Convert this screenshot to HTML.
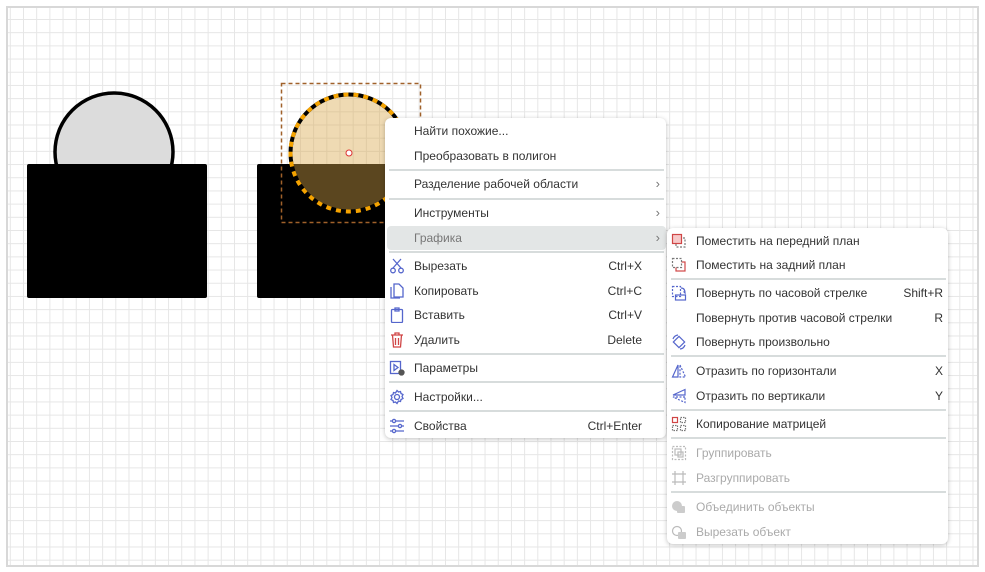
<!DOCTYPE html>
<html><head><meta charset="utf-8"><style>
*{margin:0;padding:0;box-sizing:border-box}
body{width:985px;height:572px;background:#fff;position:relative;overflow:hidden;font-family:"Liberation Sans","DejaVu Sans",sans-serif;font-size:12px;color:#333}
.canvas{position:absolute;left:6px;top:6px;width:973px;height:561px;border:2px solid #d8d8d8;
background-color:#fff;
background-image:linear-gradient(#e6e6e6 1px,transparent 1px),linear-gradient(90deg,#e6e6e6 1px,transparent 1px);
background-size:13.2px 13.2px;background-position:15px 11px}
.menu{position:absolute;background:#fff;border-radius:6px;box-shadow:0 1px 5px rgba(0,0,0,.25)}
.it{position:absolute;left:0;right:0;height:24px;line-height:24px}
.it .t{position:absolute;left:29px}
.it .k{position:absolute;right:24px}
.it .ar{position:absolute;right:6px;color:#777;font-size:13px}
.it svg{position:absolute;left:4px;top:4px}
.sep{position:absolute;left:4px;right:2px;height:2px;background:#d7dcdc}
.dis{color:#aaa}
.hl{background:#e3e6e6;border-radius:4px;left:2px;right:0;color:#777}
</style></head><body>
<div class="canvas"></div>
<svg width="985" height="572" style="position:absolute;left:0;top:0">
<circle cx="114" cy="152" r="59" fill="#dcdcdc" stroke="#000" stroke-width="3.5"/>
<rect x="27" y="164" width="180" height="134" fill="#000" rx="2"/>
<rect x="257" y="164" width="150" height="134" fill="#000" rx="2"/>
<circle cx="349" cy="153" r="58.5" fill="#d9a84a" fill-opacity=".42" stroke="#000" stroke-width="4"/>
<circle cx="349" cy="153" r="58.5" fill="none" stroke="#f5a300" stroke-width="4" stroke-dasharray="5 5"/>
<rect x="281.5" y="83.5" width="139" height="139" fill="none" stroke="#a0612a" stroke-width="1.5" stroke-dasharray="4 3"/>
<circle cx="349" cy="153" r="3" fill="#fff" stroke="#d33" stroke-width="1"/>
</svg>

<div class="menu" style="left:385px;top:118px;width:281px;height:320px">
<div class="it" style="top:1px"><span class="t">Найти похожие...</span></div>
<div class="it" style="top:26px"><span class="t">Преобразовать в полигон</span></div>
<div class="sep" style="top:51px"></div>
<div class="it" style="top:54px"><span class="t">Разделение рабочей области</span><span class="ar">›</span></div>
<div class="sep" style="top:80px"></div>
<div class="it" style="top:83px"><span class="t">Инструменты</span><span class="ar">›</span></div>
<div class="it hl" style="top:108px"><span class="t" style="left:27px">Графика</span><span class="ar">›</span></div>
<div class="sep" style="top:133px"></div>
<div class="it" style="top:136px"><svg width="16" height="16" viewBox="0 0 16 16" fill="none" stroke="#5566cc" stroke-width="1.3"><path d="M4 1l8 9M12 1l-8 9"/><circle cx="4" cy="12.5" r="2.3"/><circle cx="12" cy="12.5" r="2.3"/></svg><span class="t">Вырезать</span><span class="k">Ctrl+X</span></div>
<div class="it" style="top:161px"><svg width="16" height="16" viewBox="0 0 16 16" fill="none" stroke="#5566cc" stroke-width="1.3"><path d="M5 1h5l4 4v9H5z M2 4v11h9"/></svg><span class="t">Копировать</span><span class="k">Ctrl+C</span></div>
<div class="it" style="top:185px"><svg width="16" height="16" viewBox="0 0 16 16" fill="none" stroke="#5566cc" stroke-width="1.3"><rect x="2.5" y="2.5" width="11" height="13" rx="1"/><path d="M6 1h4v3H6z"/></svg><span class="t">Вставить</span><span class="k">Ctrl+V</span></div>
<div class="it" style="top:210px"><svg width="16" height="16" viewBox="0 0 16 16" fill="none" stroke="#d04545" stroke-width="1.3"><path d="M2 3h12M6 3V1h4v2M3.5 3l1 12h7l1-12M6.5 6v7M9.5 6v7"/></svg><span class="t">Удалить</span><span class="k">Delete</span></div>
<div class="sep" style="top:235px"></div>
<div class="it" style="top:238px"><svg width="16" height="16" viewBox="0 0 16 16" fill="none" stroke="#5566cc" stroke-width="1.3"><rect x="1.5" y="1.5" width="10" height="12"/><path d="M5 4.5l4 3-4 3z"/><circle cx="12.5" cy="12.5" r="2.5" fill="#555" stroke="#555"/></svg><span class="t">Параметры</span></div>
<div class="sep" style="top:263px"></div>
<div class="it" style="top:267px"><svg width="16" height="16" viewBox="0 0 16 16" fill="none" stroke="#5566cc" stroke-width="1.3"><circle cx="8" cy="8" r="2.5"/><path d="M8 1.5l1.5 1.5 2-.5.5 2 2 1-1 2 1 2-2 1-.5 2-2-.5L8 14.5 6.5 13l-2 .5-.5-2-2-1 1-2-1-2 2-1 .5-2 2 .5z"/></svg><span class="t">Настройки...</span></div>
<div class="sep" style="top:292px"></div>
<div class="it" style="top:296px"><svg width="16" height="16" viewBox="0 0 16 16" fill="none" stroke="#5566cc" stroke-width="1.3"><path d="M1 3h14M1 8h14M1 13h14"/><circle cx="5" cy="3" r="1.6" fill="#fff"/><circle cx="11" cy="8" r="1.6" fill="#fff"/><circle cx="5" cy="13" r="1.6" fill="#fff"/></svg><span class="t">Свойства</span><span class="k">Ctrl+Enter</span></div>
</div>

<div class="menu" style="left:667px;top:228px;width:281px;height:316px">
<div class="it" style="top:1px"><svg width="16" height="16" viewBox="0 0 16 16" fill="none" stroke-width="1.2"><rect x="5" y="5" width="9" height="9" stroke="#777" stroke-dasharray="2 1.5"/><rect x="1.5" y="1.5" width="9" height="9" fill="#f6c9c9" stroke="#d04545"/></svg><span class="t">Поместить на передний план</span></div>
<div class="it" style="top:25px"><svg width="16" height="16" viewBox="0 0 16 16" fill="none" stroke-width="1.2"><rect x="5" y="5" width="9" height="9" stroke="#d04545"/><rect x="1.5" y="1.5" width="9" height="9" fill="#fff" stroke="#777" stroke-dasharray="2 1.5"/></svg><span class="t">Поместить на задний план</span></div>
<div class="sep" style="top:50px"></div>
<div class="it" style="top:53px"><svg width="16" height="16" viewBox="0 0 16 16" fill="none" stroke="#5566cc" stroke-width="1.2"><rect x="1.5" y="1.5" width="8" height="10" stroke-dasharray="2 1.5"/><rect x="4.5" y="10" width="10" height="5"/><path d="M10 3c3 0 4 2 4 5l-1.5-1.5"/></svg><span class="t">Повернуть по часовой стрелке</span><span class="k" style="right:5px">Shift+R</span></div>
<div class="it" style="top:78px"><span class="t">Повернуть против часовой стрелки</span><span class="k" style="right:5px">R</span></div>
<div class="it" style="top:102px"><svg width="16" height="16" viewBox="0 0 16 16" fill="none" stroke="#5566cc" stroke-width="1.2"><rect x="4" y="4" width="8" height="8" transform="rotate(45 8 8)"/><path d="M2 5a6 6 0 0 1 5-4M14 11a6 6 0 0 1-5 4"/></svg><span class="t">Повернуть произвольно</span></div>
<div class="sep" style="top:127px"></div>
<div class="it" style="top:131px"><svg width="16" height="16" viewBox="0 0 16 16" fill="none" stroke="#5566cc" stroke-width="1.2"><path d="M7 2L1.5 14H7z"/><path d="M9 2l5.5 12H9z" stroke-dasharray="2 1.5"/></svg><span class="t">Отразить по горизонтали</span><span class="k" style="right:5px">X</span></div>
<div class="it" style="top:156px"><svg width="16" height="16" viewBox="0 0 16 16" fill="none" stroke="#5566cc" stroke-width="1.2"><path d="M14 1.5L2 7h12z"/><path d="M14 9L2 9l12 5.5z" stroke-dasharray="2 1.5"/></svg><span class="t">Отразить по вертикали</span><span class="k" style="right:5px">Y</span></div>
<div class="sep" style="top:181px"></div>
<div class="it" style="top:184px"><svg width="16" height="16" viewBox="0 0 16 16" fill="none" stroke-width="1.2"><rect x="1.5" y="1.5" width="5" height="5" stroke="#d04545"/><rect x="9.5" y="1.5" width="5" height="5" stroke="#777" stroke-dasharray="1.5 1"/><rect x="1.5" y="9.5" width="5" height="5" stroke="#777" stroke-dasharray="1.5 1"/><rect x="9.5" y="9.5" width="5" height="5" stroke="#777" stroke-dasharray="1.5 1"/></svg><span class="t">Копирование матрицей</span></div>
<div class="sep" style="top:209px"></div>
<div class="it dis" style="top:213px"><svg width="16" height="16" viewBox="0 0 16 16" fill="none" stroke="#bbb" stroke-width="1.2"><rect x="1.5" y="1.5" width="13" height="13" stroke-dasharray="2 1.5"/><rect x="4" y="4" width="6" height="6"/><rect x="7" y="7" width="5" height="5"/></svg><span class="t">Группировать</span></div>
<div class="it dis" style="top:238px"><svg width="16" height="16" viewBox="0 0 16 16" fill="none" stroke="#bbb" stroke-width="1.2"><path d="M1 4h14M1 12h14M4 1v14M12 1v14"/></svg><span class="t">Разгруппировать</span></div>
<div class="sep" style="top:263px"></div>
<div class="it dis" style="top:267px"><svg width="16" height="16" viewBox="0 0 16 16"><circle cx="6" cy="7" r="5" fill="#ccc"/><rect x="6" y="7" width="8" height="7" rx="1" fill="#ccc"/></svg><span class="t">Объединить объекты</span></div>
<div class="it dis" style="top:292px"><svg width="16" height="16" viewBox="0 0 16 16"><circle cx="6" cy="7" r="4.5" fill="none" stroke="#bbb" stroke-width="1.2"/><rect x="7" y="8" width="8" height="7" rx="1" fill="#ccc"/></svg><span class="t">Вырезать объект</span></div>
</div>
</body></html>
